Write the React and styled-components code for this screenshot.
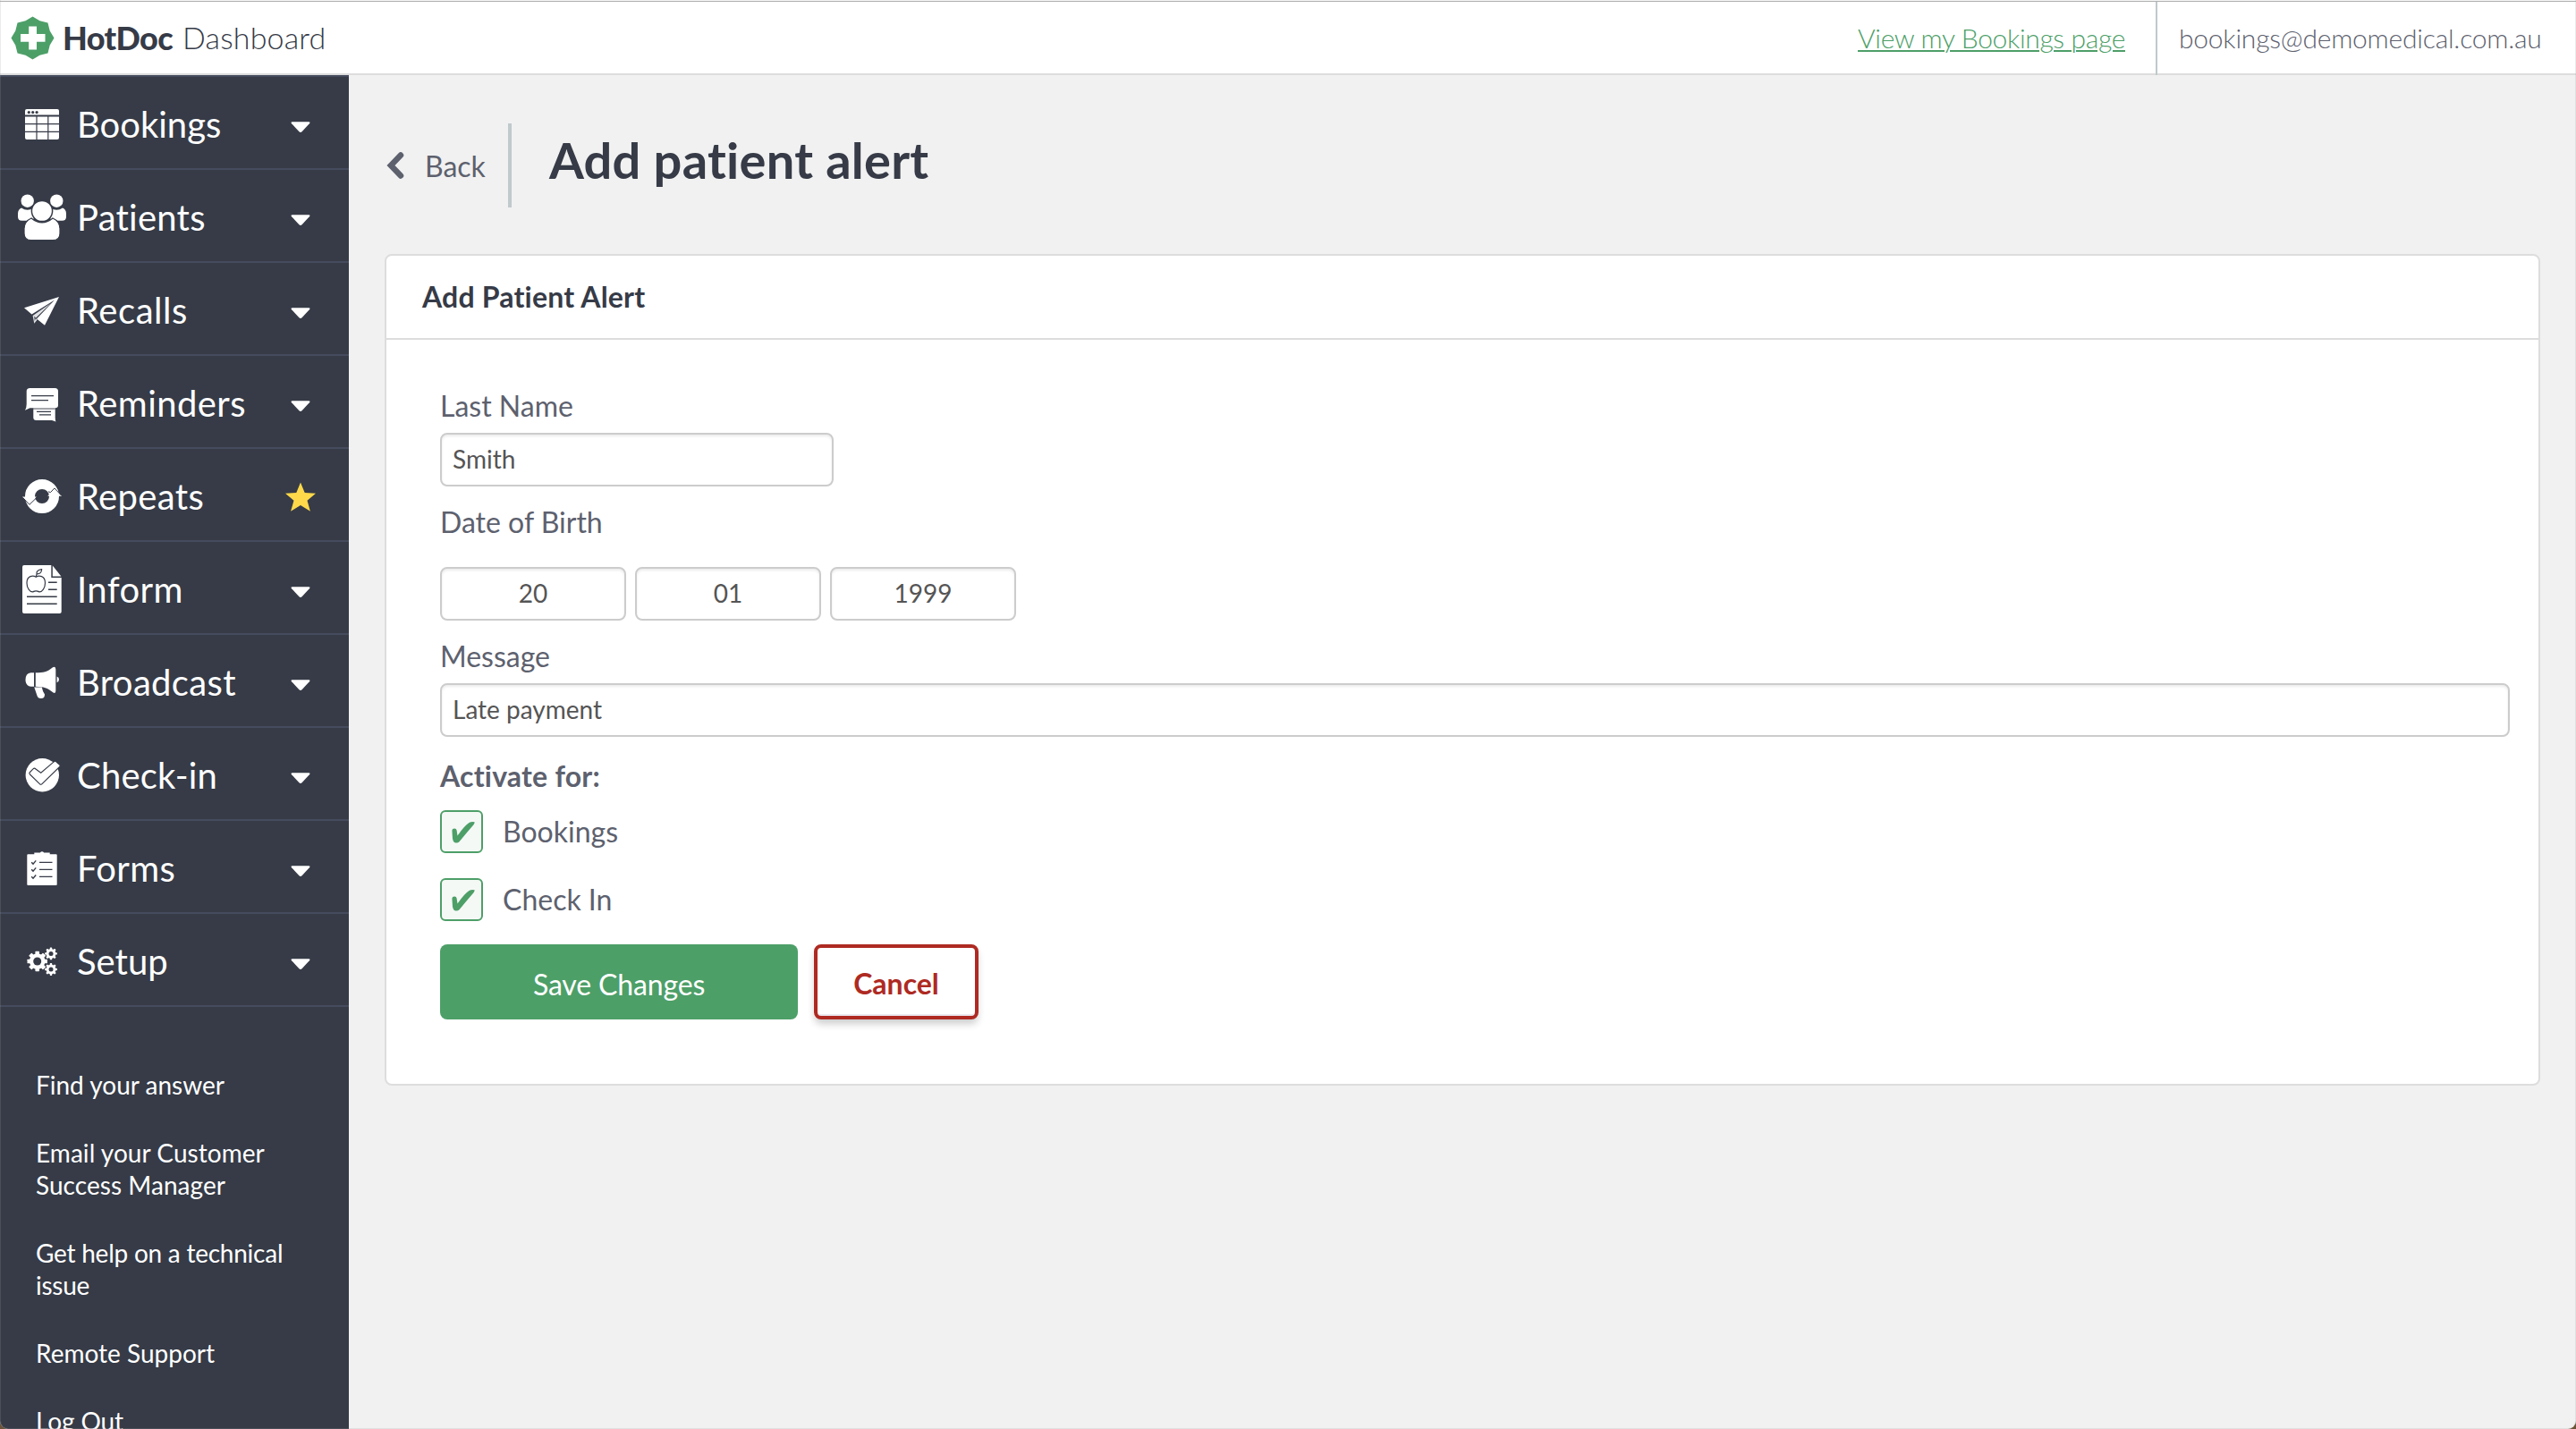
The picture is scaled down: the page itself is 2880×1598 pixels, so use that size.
// App.jsx
// Patient alert form inside the dashboard shell

import { useState } from "react";
import styled, { createGlobalStyle } from "styled-components";

const GlobalStyle = createGlobalStyle`
    *, *::before, *::after {
        box-sizing: border-box;
    }
    body {
        margin: 0;
        background: #6d5438;
        font-family: Lato, "Liberation Sans", sans-serif;
        font-variant-ligatures: none;
        color: #5d616e;
    }
    button, input {
        font-family: inherit;
    }
`;

const Page = styled.div`
    position: relative;
    display: flex;
    flex-direction: column;
    height: 1598px;
    overflow: hidden;
    background: #f1f1f1;
    border-radius: 0 0 9px 9px;

    /* window edge */
    &::after {
        content: "";
        position: absolute;
        inset: 0;
        border: 1px solid rgba(160, 160, 160, 0.2);
        border-top: none;
        border-radius: 0 0 9px 9px;
        pointer-events: none;
    }
`;

const TopBar = styled.header`
    display: flex;
    flex: none;
    align-items: stretch;
    height: 83px;
    margin-top: 1px;
    background: #fff;
    border-top: 1px solid #aeb0b0;
    border-bottom: 2px solid #ddd;
    box-shadow: 0 -1px 0 #f6f6f6;
`;

const Brand = styled.div`
    display: flex;
    align-items: center;
    flex: 1;
    padding-left: 12px;
    color: #363b47;

    svg {
        width: 49px;
        height: 49px;
        margin-right: 9px;
    }
`;

const BrandName = styled.span`
    font-size: 36px;
    font-weight: 900;
    line-height: 44px;
    letter-spacing: -0.6px;
`;

const BrandSection = styled.span`
    margin-left: 11px;
    font-size: 34px;
    font-weight: 300;
    line-height: 44px;
    letter-spacing: 0.15px;
`;

const BookingsLink = styled.a`
    align-self: center;
    margin-right: 34px;
    font-size: 30px;
    font-weight: 300;
    line-height: 40px;
    letter-spacing: -0.35px;
    color: #4d9f68;
    text-decoration: underline;
    text-decoration-thickness: 2px;
    text-underline-offset: 2px;
`;

const Account = styled.div`
    display: flex;
    align-items: center;
    width: 470px;
    margin-bottom: -2px;
    padding: 0 0 2px 24px;
    border-left: 2px solid #c0c9cb;
    font-size: 30px;
    font-weight: 300;
    letter-spacing: -0.22px;
`;

const Columns = styled.div`
    display: flex;
    flex: 1;
    min-height: 0;
`;

const Sidebar = styled.aside`
    flex: none;
    width: 390px;
    overflow: hidden;
    background: #363b47;
    border-top: 2px solid #454c5e;
    color: #fff;
`;

const NavItem = styled.div`
    display: flex;
    align-items: center;
    height: 104px;
    padding: 0 36px 0 17px;
    border-bottom: 2px solid #454c5e;
    cursor: pointer;
`;

const NavIcon = styled.svg`
    flex: none;
    width: 60px;
    height: 60px;
    fill: #fff;
`;

const NavLabel = styled.span`
    flex: 1;
    padding: 3px 0 0 9px;
    font-size: 40px;
    line-height: 48px;
    letter-spacing: ${({ $tracking = 0 }) => $tracking}px;
`;

const NavMark = styled.svg`
    width: 36px;
    height: 36px;
    margin-top: ${({ $star }) => ($star ? 7 : 9)}px;
    fill: ${({ $star }) => ($star ? "#ffd94a" : "#fff")};
`;

const HelpLinks = styled.nav`
    display: flex;
    flex-direction: column;
    gap: 40px;
    padding: 69px 60px 0 40px;
`;

const HelpLink = styled.a`
    font-size: 28px;
    line-height: 36px;
    letter-spacing: ${({ $tracking = 0 }) => $tracking}px;
    color: #fff;
`;

const Main = styled.main`
    flex: 1;
    padding: 54px 40px 0;
`;

const TitleRow = styled.div`
    display: flex;
    height: 94px;
    margin-bottom: 52px;
`;

const BackLink = styled.a`
    display: flex;
    align-items: center;
    width: 142px;
    padding-top: 1px;
    border-right: 4px solid #c0c9cb;
    font-size: 32px;

    svg {
        width: 20px;
        height: 30px;
        margin: 0 23px 1px 2px;
    }
`;

const Title = styled.h1`
    margin: 0 0 0 42px;
    font-size: 56px;
    font-weight: 700;
    line-height: 82px;
    letter-spacing: 0.27px;
    color: #363b47;
`;

const Card = styled.section`
    background: #fff;
    border: 2px solid #ddd;
    border-radius: 8px;
`;

const CardHeader = styled.h2`
    height: 94px;
    margin: 0;
    padding-left: 40px;
    border-bottom: 2px solid #ddd;
    font-size: 32px;
    font-weight: 700;
    line-height: 91px;
    letter-spacing: 0.2px;
    color: #363b47;
`;

const Form = styled.form`
    padding: 54px 32px 72px 60px;
`;

const Label = styled.label`
    display: block;
    margin-top: ${({ $top = 20 }) => $top}px;
    margin-bottom: ${({ $bottom = 10 }) => $bottom}px;
    font-size: 32px;
    font-weight: ${({ $bold }) => ($bold ? 700 : 400)};
    line-height: 40px;
    letter-spacing: ${({ $bold }) => ($bold ? "0.22px" : "normal")};
`;

const Input = styled.input`
    display: block;
    width: ${({ $width }) => $width || "100%"};
    height: 60px;
    padding: 0 12px 2px;
    border: 2px solid #ccc;
    border-radius: 8px;
    box-shadow: inset 0 2px 3px rgba(0, 0, 0, 0.08);
    background: #fff;
    font-size: 28px;
    color: #555;
    text-align: ${({ $center }) => ($center ? "center" : "left")};
    outline: none;
`;

const DateFields = styled.div`
    display: flex;
    gap: 10px;
`;

const CheckList = styled.div`
    display: flex;
    flex-direction: column;
    gap: 28px;
`;

const CheckRow = styled.div`
    display: flex;
    align-items: center;
    gap: 22px;
    height: 48px;
    font-size: 32px;
    line-height: 48px;
    cursor: pointer;
`;

const CheckBox = styled.span`
    display: flex;
    align-items: center;
    justify-content: center;
    width: 48px;
    height: 48px;
    border: 2px solid #4d9f68;
    border-radius: 6px;
    background: #f5f9f6;

    svg {
        width: 26px;
        height: 24px;
        margin: 2px 0 0 3px;
        fill: #4d9f68;
    }
`;

const Actions = styled.div`
    display: flex;
    gap: 18px;
    margin-top: 26px;
`;

const SaveButton = styled.button`
    width: 400px;
    height: 84px;
    padding: 4px 0 0;
    border: none;
    border-radius: 8px;
    background: #4d9f68;
    font-size: 32px;
    letter-spacing: -0.15px;
    color: #fff;
`;

const CancelButton = styled.button`
    width: 184px;
    height: 84px;
    padding: 3px 0 0;
    border: 4px solid #ae2a22;
    border-radius: 8px;
    background: #fff;
    box-shadow: 0 6px 8px -1px rgba(0, 0, 0, 0.2), inset 0 -2px 0 #ebe9f0;
    font-size: 32px;
    font-weight: 700;
    color: #ae2a22;
`;

const DARK = "#363b47";

// star-shaped outline, alternating between two radii
const starPoints = (cx, cy, outer, inner, count) =>
    Array.from({ length: count * 2 }, (_, i) => {
        const r = i % 2 ? inner : outer;
        const a = (Math.PI * i) / count - Math.PI / 2;
        return `${(cx + r * Math.cos(a)).toFixed(2)},${(cy + r * Math.sin(a)).toFixed(2)}`;
    }).join(" ");

const Gear = ({ x, y, r, hole, teeth, tooth }) => (
    <g transform={`translate(${x} ${y})`}>
        {Array.from({ length: teeth }, (_, i) => (
            <rect key={i} x={-tooth / 2} y={-r} width={tooth} height={r} rx="0.6" transform={`rotate(${(360 / teeth) * i + 90})`} />
        ))}
        <circle r={r * 0.78} />
        <circle r={hole} fill={DARK} />
    </g>
);

const icons = {
    bookings: (
        <>
            <path d="M13 15h34a2 2 0 0 1 2 2v4.6H11V17a2 2 0 0 1 2-2z" />
            <path d="M11 23.4h12.4V31H11zM24.6 23.4h11.6V31H24.6zM37.4 23.4H49V31H37.4zM11 32.3h12.4v7.5H11zM24.6 32.3h11.6v7.5H24.6zM37.4 32.3H49v7.5H37.4zM11 41.1h12.4V49H13a2 2 0 0 1-2-2zM24.6 41.1h11.6V49H24.6zM37.4 41.1H49V47a2 2 0 0 1-2 2h-9.6z" />
            <g fill={DARK}>
                <circle cx="15.3" cy="18.6" r="1.6" />
                <circle cx="19.7" cy="18.6" r="1.6" />
                <circle cx="24.1" cy="18.6" r="1.6" />
            </g>
        </>
    ),
    patients: (
        <>
            <path d="M7 21.4Q13.5 26 20.5 21.4V35.7H7.5Q3 35.7 3 31.5V28Q3 23 7 21.4zM53 21.4Q46.5 26 39.5 21.4V35.7H52.5Q57 35.7 57 31.5V28Q57 23 53 21.4z" />
            <circle cx="13.7" cy="13.7" r="7.2" />
            <circle cx="46.3" cy="13.7" r="7.2" />
            <path d="M18 33Q30 43 42 33Q50 36.5 50 45V50Q50 57.7 42 57.7H18Q10 57.7 10 50V45Q10 36.5 18 33z" stroke={DARK} strokeWidth="1.2" />
            <circle cx="30" cy="25" r="11.6" stroke={DARK} strokeWidth="1.5" />
        </>
    ),
    recalls: (
        <>
            <path d="M49 17L10 29.3L18.5 36.6L44 20.5L24 41.6L33 48.7z" />
            <path d="M19.6 38L21.3 46.7L24.6 42.6L22.6 41L40 24z" opacity="0.85" />
            <path d="M21.2 38.5L21.8 44L23 40.5z" fill={DARK} />
        </>
    ),
    reminders: (
        <>
            <path d="M16.5 15H44.5Q48 15 48 18.5V34Q48 37.2 44.5 37.2H16.5L11 39.8Q12.7 37 12.7 33V18.5Q12.7 15 16.5 15z" />
            <path d="M20.3 38.7H44.7V48Q44.7 51 45.5 52.4L41 51H23.5Q20.3 51 20.3 48z" />
            <path d="M20.3 37.2H45V38.6H20.3z" opacity="0.55" />
            <path d="M18 23.7H43M18 28.7H37M24 41.3H40M27 44.9H40" stroke={DARK} strokeWidth="1.3" />
        </>
    ),
    repeats: (
        <>
            <circle cx="30" cy="32" r="13.5" fill="none" stroke="#fff" strokeWidth="11" />
            <path d="M8 32.6L15.7 40.8L23.8 32.6zM52 31.8L44.2 23.4L36.2 31.8z" />
            <path d="M9 34L15.9 41.3L24 33.5M51.5 31L43.9 22.9L39.5 27.6L37 26.8" fill="none" stroke={DARK} strokeWidth="1" />
        </>
    ),
    inform: (
        <>
            <path d="M10 5H40.3V19H51.7V57Q51.7 59 49.7 59H10Q8 59 8 57V7Q8 5 10 5z" />
            <path d="M41.8 5.5L51.4 17.5H41.8z" />
            <path d="M37 24.3H46.7M37 32.3H46.7M13 40.3H46.7M13 48.3H46.7" stroke={DARK} strokeWidth="1.5" />
            <path d="M23.2 18.2C20 16.2 13 16.5 13 25C13 30.5 16.5 35 19.5 34.8C21.5 34.5 22 33.8 23.2 33.8C24.4 33.8 25 34.5 27 34.8C30 35 33.5 30.5 33.5 25C33.5 16.5 26.4 16.2 23.2 18.2zM23.2 17.5L24.4 14.5M24 14.8Q23.5 10.5 29.6 9.7Q29.5 15 24 14.8z" fill="none" stroke={DARK} strokeWidth="1.2" />
        </>
    ),
    broadcast: (
        <>
            <path d="M21 21.2V36.8H17.5Q11.5 36 11.5 29Q11.5 22 17.5 21.2z" />
            <path d="M22.8 21.2C32 21.2 35.5 20.5 42 15.2Q45.3 13.5 45.3 17.5V41.5Q45.3 45 42.5 43.5C36 38.2 32 37 22.8 36.8z" />
            <path d="M21.3 37.6H29.8Q30.5 42 33 45.5Q33 50 29 50Q25.5 50.3 24.5 47z" />
            <path d="M46.6 25.5Q49 26.2 49 28.8Q49 31.5 46.6 32.2z" />
        </>
    ),
    checkin: (
        <>
            <circle cx="30.3" cy="31.7" r="18.7" />
            <path d="M16.5 28.5L20 24.8Q21.5 23.5 23 25L28.7 29.2L43.5 16.7Q44.8 15.7 46 17L49.8 20.3Q50.8 21.3 49.6 22.5L30 41.7Q28.7 43 27.4 41.6L16.5 31Q15.2 29.8 16.5 28.5z" stroke={DARK} strokeWidth="1.1" />
        </>
    ),
    forms: (
        <>
            <path d="M14.3 16.2H21.3V14.6H27.8Q30 11.8 32.2 14.6H38.7V16.2H45.7Q46.7 16.2 46.7 17.2V50Q46.7 51 45.7 51H14.3Q13.3 51 13.3 50V17.2Q13.3 16.2 14.3 16.2z" />
            <path d="M27 25.4H41.5M27 33.4H41.5M27 41.4H41.5M18.2 25.2L20 27.1L23.2 23.4M18.2 33.2L20 35.1L23.2 31.4M18.2 41.3L20 43.2L23.2 39.5" fill="none" stroke={DARK} strokeWidth="1.4" />
        </>
    ),
    setup: (
        <>
            <Gear x={24.7} y={32} r={11.2} hole={4.5} teeth={8} tooth={4.6} />
            <Gear x={40} y={23.4} r={6.9} hole={2.5} teeth={8} tooth={2.4} />
            <Gear x={40} y={41} r={6.9} hole={2.5} teeth={8} tooth={2.4} />
        </>
    ),
};

const menu = [
    { icon: "bookings", label: "Bookings" },
    { icon: "patients", label: "Patients", tracking: 0.25 },
    { icon: "recalls", label: "Recalls", tracking: 0.55 },
    { icon: "reminders", label: "Reminders", tracking: 0.45 },
    { icon: "repeats", label: "Repeats", tracking: 0.35, star: true },
    { icon: "inform", label: "Inform", tracking: 0.4 },
    { icon: "broadcast", label: "Broadcast", tracking: 0.35 },
    { icon: "checkin", label: "Check-in", tracking: 0.2 },
    { icon: "forms", label: "Forms", tracking: 0.35 },
    { icon: "setup", label: "Setup" },
];

const helpLinks = [
    { text: "Find your answer" },
    { text: "Email your Customer Success Manager", tracking: 0.05 },
    { text: "Get help on a technical issue", tracking: -0.24 },
    { text: "Remote Support" },
    { text: "Log Out", tracking: -0.1 },
];

const Logo = () => (
    <svg viewBox="0 0 49 49">
        <polygon points={starPoints(24.5, 24.5, 24, 20.8, 8)} fill="#4d9f68" />
        <path d="M20.2 11.5H29V20H38.5V28.8H29V37.5H20.2V28.8H11V20H20.2z" fill="#fff" />
    </svg>
);

const AlertCheck = ({ label }) => {
    const [checked, setChecked] = useState(true);

    return (
        <CheckRow onClick={() => setChecked(!checked)}>
            <CheckBox>
                {checked && (
                    <svg viewBox="0 0 26 24">
                        <path d="M0.4 9.7Q0.5 7.6 3 7.6Q5.3 7.5 5.6 9.5L6.5 15.5Q14 4.5 19.5 1Q22 -0.3 25.5 0.3Q26 1.3 24.5 3.2Q16 13 8.5 22.2Q6.5 24.3 3.5 23.3Q1.5 22.5 1 19z" />
                    </svg>
                )}
            </CheckBox>
            {label}
        </CheckRow>
    );
};

const App = () => {
    const [lastName, setLastName] = useState("Smith");
    const [birth, setBirth] = useState({ day: "20", month: "01", year: "1999" });
    const [message, setMessage] = useState("Late payment");

    return (
        <>
            <GlobalStyle />
            <Page>
                <TopBar>
                    <Brand>
                        <Logo />
                        <BrandName>HotDoc</BrandName>
                        <BrandSection>Dashboard</BrandSection>
                    </Brand>
                    <BookingsLink>View my Bookings page</BookingsLink>
                    <Account>bookings@demomedical.com.au</Account>
                </TopBar>

                <Columns>
                    <Sidebar>
                        {menu.map(({ icon, label, star, tracking }) => (
                            <NavItem key={label}>
                                <NavIcon viewBox="0 0 60 60">{icons[icon]}</NavIcon>
                                <NavLabel $tracking={tracking}>{label}</NavLabel>
                                <NavMark viewBox="0 0 36 36" $star={star}>
                                    {star ? (
                                        <polygon points="18,0.5 22.7,12 35,12.7 25.5,20.7 28.9,32.7 18,26.1 7.1,32.7 10.5,20.7 1,12.7 13.3,12" />
                                    ) : (
                                        <path d="M8.9 12.3H27.1Q29.4 12.3 27.9 14.3L19.5 23.2Q18 24.7 16.5 23.2L8.1 14.3Q6.6 12.3 8.9 12.3z" />
                                    )}
                                </NavMark>
                            </NavItem>
                        ))}
                        <HelpLinks>
                            {helpLinks.map(({ text, tracking }) => (
                                <HelpLink key={text} $tracking={tracking}>{text}</HelpLink>
                            ))}
                        </HelpLinks>
                    </Sidebar>

                    <Main>
                        <TitleRow>
                            <BackLink>
                                <svg viewBox="0 0 20 30">
                                    <path d="M16 3.5L5 15L16 26.5" fill="none" stroke="#5d616e" strokeWidth="6.5" strokeLinecap="round" />
                                </svg>
                                Back
                            </BackLink>
                            <Title>Add patient alert</Title>
                        </TitleRow>

                        <Card>
                            <CardHeader>Add Patient Alert</CardHeader>
                            <Form onSubmit={(e) => e.preventDefault()}>
                                <Label $top={0}>Last Name</Label>
                                <Input $width="440px" value={lastName} onChange={(e) => setLastName(e.target.value)} />

                                <Label $bottom={30}>Date of Birth</Label>
                                <DateFields>
                                    {Object.keys(birth).map((part) => (
                                        <Input
                                            key={part}
                                            $width="208px"
                                            $center
                                            value={birth[part]}
                                            onChange={(e) => setBirth({ ...birth, [part]: e.target.value })}
                                        />
                                    ))}
                                </DateFields>

                                <Label>Message</Label>
                                <Input value={message} onChange={(e) => setMessage(e.target.value)} />

                                <Label as="div" $bold $top={24} $bottom={18}>Activate for:</Label>
                                <CheckList>
                                    <AlertCheck label="Bookings" />
                                    <AlertCheck label="Check In" />
                                </CheckList>

                                <Actions>
                                    <SaveButton type="submit">Save Changes</SaveButton>
                                    <CancelButton type="button">Cancel</CancelButton>
                                </Actions>
                            </Form>
                        </Card>
                    </Main>
                </Columns>
            </Page>
        </>
    );
};

export default App;
